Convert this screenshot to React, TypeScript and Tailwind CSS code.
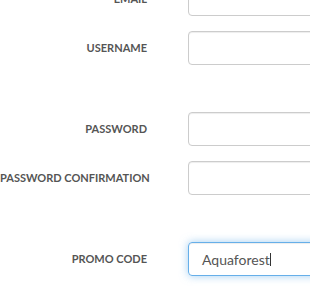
const fields = [
  { label: 'Email', gapAfter: false },
  { label: 'Username', gapAfter: true },
  { label: 'Password', gapAfter: false },
  { label: 'Password Confirmation', gapAfter: true },
];

const Row = ({ label, children }: { label: string; children: React.ReactNode }) => (
  <div className="flex items-center mb-[15px]">
    <label className="w-[147px] shrink-0 text-right text-[11px] font-bold uppercase text-[#555] whitespace-nowrap">
      {label}
    </label>
    <div className="ml-[41px] shrink-0">{children}</div>
  </div>
);

export default function App() {
  return (
    <div className="w-[310px] h-[287px] overflow-hidden bg-white font-['Lato','Liberation_Sans',sans-serif]">
      <form className="-mt-[18px]">
        {fields.map((f) => (
          <div key={f.label}>
            <Row label={f.label}>
              <input
                type="text"
                className="w-[220px] h-[34px] rounded-[4px] border border-[#ccc] px-3 text-[14px] text-[#555] shadow-[inset_0_1px_1px_rgba(0,0,0,0.075)] outline-none"
              />
            </Row>
            {f.gapAfter && <div className="h-[32px]" />}
          </div>
        ))}
        <Row label="Promo Code">
          <div className="flex items-center w-[220px] h-[34px] rounded-[4px] border border-[#66afe9] pl-[13px] text-[14px] text-[#555] shadow-[inset_0_1px_1px_rgba(0,0,0,0.075),0_0_8px_rgba(102,175,233,0.6)]">
            <span>Aquaforest</span>
            <span className="w-px h-[13px] bg-[#333]" />
          </div>
        </Row>
      </form>
    </div>
  );
}
